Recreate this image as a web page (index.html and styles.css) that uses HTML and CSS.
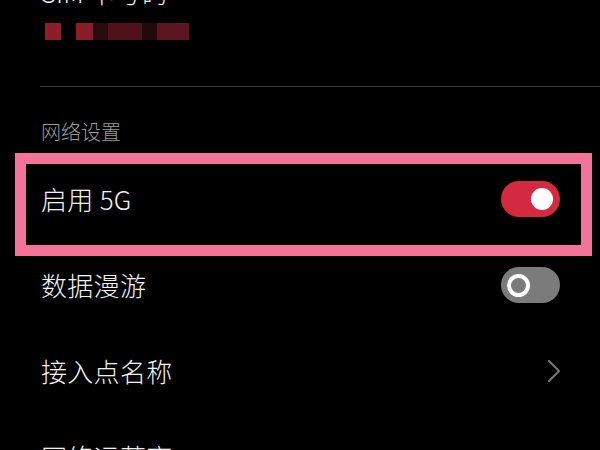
FILE: index.html
```html
<!DOCTYPE html>
<html lang="zh-CN">
<head>
<meta charset="utf-8">
<title>移动网络</title>
<link rel="stylesheet" href="styles.css">
</head>
<body>
<div class="screen">
  <section class="sim">
    <div class="sim-title">SIM 卡号码</div>
    <div class="pixels">
      <span class="px px-a"></span>
      <span class="px px-gap"></span>
      <span class="px px-b"></span>
      <span class="px px-c"></span>
      <span class="px px-d"></span>
      <span class="px px-e"></span>
      <span class="px px-f"></span>
    </div>
  </section>
  <hr class="divider">
  <div class="section-title">网络设置</div>
  <ul class="list">
    <li class="row highlighted">
      <span class="label">启用 5G</span>
      <span class="switch on"><span class="knob"></span></span>
      <span class="frame"></span>
    </li>
    <li class="row">
      <span class="label">数据漫游</span>
      <span class="switch off"><span class="knob"></span></span>
    </li>
    <li class="row">
      <span class="label">接入点名称</span>
      <svg class="chevron" width="12" height="22" viewBox="0 0 12 22"><polyline points="1,1 11,11 1,21" fill="none" stroke="#767676" stroke-width="2" stroke-linecap="round" stroke-linejoin="round"/></svg>
    </li>
    <li class="row">
      <span class="label">网络运营商</span>
    </li>
  </ul>
</div>
</body>
</html>
```
FILE: styles.css
```css
html, body {
  margin: 0;
  padding: 0;
  background: #000;
}
body {
  width: 600px;
  height: 450px;
  overflow: hidden;
  font-family: "Noto Sans CJK SC", "Noto Sans", sans-serif;
  font-weight: 300;
  color: #f2f2f2;
}
.screen {
  display: flex;
  flex-direction: column;
}
.sim {
  padding-left: 41px;
}
.sim-title {
  font-size: 26px;
  line-height: 30px;
  margin-top: -23px;
  color: #f2f2f2;
}
.pixels {
  display: flex;
  margin-top: 16px;
  margin-left: 4px;
  height: 17px;
}
.px { display: block; height: 100%; }
.px-a { width: 16px; background: #8c1d2a; }
.px-gap { width: 15px; background: #000; }
.px-b { width: 17px; background: #8a1c29; }
.px-c { width: 15px; background: #2a0a0f; }
.px-d { width: 34px; background: #4f121b; }
.px-e { width: 15px; background: #22080c; }
.px-f { width: 32px; background: #5c1521; }

.divider {
  margin: 46px 0 0 40px;
  border: 0;
  height: 1px;
  background: #3a3a3a;
}
.section-title {
  margin-top: 31px;
  padding-left: 41px;
  font-size: 20px;
  line-height: 28px;
  color: #9c9c9c;
}
.list {
  list-style: none;
  margin: 10px 0 0;
  padding: 0;
}
.row {
  position: relative;
  height: 86px;
  padding: 0 40px 0 41px;
  display: flex;
  align-items: center;
  justify-content: space-between;
}
.label {
  font-size: 26px;
  line-height: 30px;
  color: #f2f2f2;
  letter-spacing: 0.3px;
}
.switch {
  position: relative;
  width: 59px;
  height: 36px;
  border-radius: 18px;
  display: flex;
  align-items: center;
}
.switch.on {
  background: #d32a3f;
  justify-content: flex-end;
  padding-right: 7px;
  box-sizing: border-box;
}
.switch.on .knob {
  width: 22px;
  height: 22px;
  border-radius: 50%;
  background: #fff;
}
.switch.off {
  background: #7b7b7b;
  padding-left: 6px;
  box-sizing: border-box;
}
.switch.off .knob {
  width: 23px;
  height: 23px;
  border-radius: 50%;
  border: 4.5px solid #fff;
  background: #7b7b7b;
  box-sizing: border-box;
}
.chevron {
  display: block;
}
.frame {
  position: absolute;
  top: -3px;
  bottom: -14px;
  left: 15px;
  right: 8px;
  border: 11px solid #f3739a;
  pointer-events: none;
}
```
